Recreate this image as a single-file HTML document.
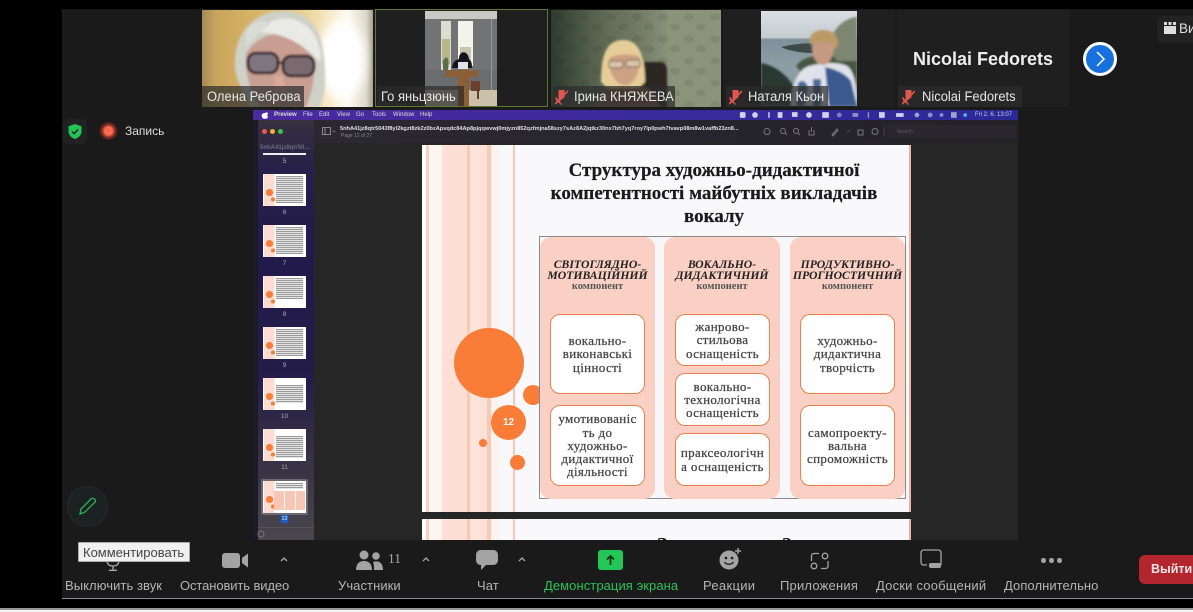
<!DOCTYPE html>
<html><head><meta charset="utf-8">
<style>
html,body{margin:0;padding:0;background:#000}
#p{position:relative;width:1193px;height:612px;overflow:hidden;background:#000;font-family:"Liberation Sans","Noto Sans CJK SC",sans-serif;filter:blur(.35px)}
#p div,#p span,#p svg{position:absolute}
.t{white-space:nowrap}
.tag{background:rgba(45,45,45,.72);height:21px;top:86px}
.nm{color:#e6e6e6;font-size:13.5px;top:89px;white-space:nowrap;transform:scaleX(.96);transform-origin:0 0}
.lb{top:578px;font-size:13px;color:#b4b4b4;white-space:nowrap;line-height:15px;letter-spacing:.07px}
.mb{top:112px;font-size:6px;color:#ddd;font-weight:bold;line-height:7px;white-space:nowrap}
.col{background:#fbd0c4;border-radius:11px;top:237px;height:262px}
.card{background:#fff;border:1.5px solid #e8834f;border-radius:10px;box-sizing:border-box;display:flex;align-items:center;justify-content:center;text-align:center;font-family:"Liberation Serif",serif;font-size:13px;line-height:13.3px;color:#444;letter-spacing:.35px;-webkit-text-stroke:.25px #444}
.h{font-family:"Liberation Serif",serif;font-style:italic;font-weight:bold;font-size:11.7px;line-height:11px;color:#222;text-align:center;white-space:nowrap;top:259px}
.k{font-family:"Liberation Serif",serif;font-weight:bold;font-size:10.5px;color:#555;text-align:center;top:281px;line-height:11px}
.c{border-radius:50%;background:#f97c37}
.th{left:263px;width:43px;height:32px;background:linear-gradient(90deg,#fff 0 1px,#fcdcd1 1px 11px,#fff 12px)}
.th i{position:absolute;display:block;left:3px;top:15px;width:6.5px;height:6.5px;border-radius:50%;background:#f97c37;box-shadow:3.5px 7px 0 -1.5px #f97c37}
.th b{position:absolute;display:block;left:13px;right:3px;top:2px;bottom:3px;background:repeating-linear-gradient(180deg,#9a9a9a 0 1px,#e4e4e4 1px 2px)}
.n{color:#aaa;font-size:6.5px;left:263px;width:43px;text-align:center;line-height:8px}
.sl{background:linear-gradient(90deg,#fff 0 4px,#fcd0c1 4px 7px,#fdf5f2 7px 20px,#fddfd5 20px 45px,#fcc8b6 45px 48px,#fde4db 48px 58px,#fde0d6 58px 65px,#fcc8b6 65px 69px,#fdf3ee 69px 77px,#f9f9fb 77px 91px,#fcc8b6 91px 93px,#f9f9fb 93px 100%);left:422px;width:489px}
</style></head><body>
<div id="p">
<div style="left:62px;top:9px;width:1131px;height:589px;background:#1a1a1a"></div>
<div style="left:62px;top:598px;width:1131px;height:1px;background:#7f8c96"></div>
<div style="left:0;top:608px;width:1193px;height:2px;background:#999"></div>
<div style="left:0;top:610px;width:1193px;height:2px;background:#f4f4f4"></div>

<!-- Thumb 1 -->
<svg style="left:202px;top:10px" width="171" height="97" viewBox="0 0 171 97">
<defs>
<linearGradient id="a" x1="0" x2="1"><stop offset="0" stop-color="#a68a55"/><stop offset=".08" stop-color="#c9a45c"/><stop offset=".5" stop-color="#e2c272"/><stop offset=".72" stop-color="#f5e6c0"/><stop offset=".85" stop-color="#fdfaf0"/><stop offset=".96" stop-color="#ddd8c8"/><stop offset="1" stop-color="#a59f92"/></linearGradient>
<filter id="b1"><feGaussianBlur stdDeviation="1.1"/></filter><filter id="b3"><feGaussianBlur stdDeviation="5"/></filter>
</defs>
<rect width="171" height="97" fill="url(#a)"/>
<ellipse cx="140" cy="50" rx="24" ry="40" fill="#fff" filter="url(#b3)"/>
<g filter="url(#b1)">
<path d="M33 58C31 25 50 1 82 1c26 0 38 20 40 46 2 20 2 36-4 50H48C44 84 34 72 33 58Z" fill="#cfd1c9"/>
<path d="M44 44c4-8 14-18 28-20 14 2 30 12 40 24 2 14-2 36-8 49H58C48 82 42 60 44 44Z" fill="#c99e92"/>
<path d="M58 22c12-20 44-18 56 6 4 10 6 18 4 24-16-18-34-28-60-30Z" fill="#e9eae5"/>
<path d="M44 22c6-10 16-14 24-8-6 6-16 12-24 24Z" fill="#dadbd4"/>
<rect x="46" y="43" width="30" height="20" rx="8" fill="#7f7480" stroke="#2a1b22" stroke-width="2.600"/>
<rect x="81" y="46" width="31" height="20" rx="8" fill="#7a6a70" stroke="#2a1b22" stroke-width="2.600"/>
<path d="M76 52l5 1.500" stroke="#2a1b22" stroke-width="2"/>
<path d="M72 66c1 8-2 13 2 17 4 3 11 2 13-2-4-5-6-9-6-15Z" fill="#dca898"/>
</g>
</svg>
<div class="tag" style="left:202px;width:102px"></div>
<div class="nm" style="left:207px">Олена Реброва</div>

<!-- Thumb 2 -->
<div style="left:375px;top:9px;width:173px;height:98px;box-sizing:border-box;border:1.5px solid #5d7a30;background:#1f1f1f;overflow:hidden"></div>
<svg style="left:425px;top:11px" width="72" height="95" viewBox="0 0 72 95">
<rect width="72" height="95" fill="#727374"/>
<rect width="72" height="8" fill="#c9c8c2"/>
<rect x="16" y="10" width="10" height="49" fill="#dcdcd0"/><rect x="33" y="10" width="15" height="45" fill="#f4f3ea"/>
<rect x="17" y="28" width="8" height="25" fill="#b9b68c"/>
<rect x="35" y="36" width="11" height="15" fill="#c7c4b0"/>
<rect x="0" y="79" width="72" height="16" fill="#cbc1aa"/><rect y="59" width="72" height="20" fill="#6b6c6d"/>
<rect x="66" y="8" width="1" height="71" fill="#999"/>
<path d="M18 50c3-6 7-5 5 9h-5Z" fill="#5a6e4c"/>
<path d="M27 57c1-7 4-8 7-9 0-9 9-9 10 0 2 2 3 3 3 9Z" fill="#15151f"/>
<rect x="33" y="51" width="10" height="7" fill="#dfe1e6"/>
<path d="M20 59h33v7H44v29H33V66H20Z" fill="#8a5f35"/>
<path d="M46 70h9v10h-1v8h-2v-8h-6Z" fill="#6d3f28"/>
</svg>
<div class="tag" style="left:377px;width:87px;top:86px;height:20px"></div>
<div class="nm" style="left:381px">Го яньцзюнь</div>

<!-- Thumb 3 -->
<svg style="left:551px;top:10px" width="170" height="97" viewBox="0 0 170 97">
<defs><pattern id="w" width="26" height="22" patternUnits="userSpaceOnUse"><rect width="26" height="22" fill="#8b947b"/><ellipse cx="8" cy="7" rx="5" ry="3.500" fill="#7f8a71"/><ellipse cx="20" cy="17" rx="5" ry="3.500" fill="#7f8a71"/></pattern>
<linearGradient id="sh" x1="0" x2="1"><stop offset="0" stop-color="#1d2b1f" stop-opacity=".85"/><stop offset=".35" stop-color="#2a3627" stop-opacity=".4"/><stop offset=".7" stop-color="#000" stop-opacity="0"/></linearGradient></defs>
<rect width="170" height="97" fill="url(#w)"/><rect width="170" height="97" fill="url(#sh)"/>
<g filter="url(#b1)">
<path d="M90 52h20c4 0 6 4 6 10v35H88Z" fill="#2c2523"/>
<path d="M46 97c0-10 10-22 26-22h10c16 0 26 10 26 22Z" fill="#825645"/>
<path d="M50 72c0-24 4-42 22-42 17 0 22 18 22 42l-6 6H56Z" fill="#e6cd98"/>
<path d="M58 50c0-7 30-7 31-2 0 15-6 27-15 27S58 64 58 50Z" fill="#cda184"/>
<rect x="58" y="51" width="14" height="7" rx="2" fill="#d8c5ad" stroke="#6b4c3e"/><rect x="75" y="50" width="14" height="7" rx="2" fill="#d8c5ad" stroke="#6b4c3e"/>
</g>
</svg>
<div class="tag" style="left:553px;width:122px"></div>
<svg style="left:555px;top:90px" width="13" height="15" viewBox="0 0 13 15"><path d="M4 0h5v7L4 11ZM1 7c0 4 2 6 5 6M6 13v2" fill="#e2564f" stroke="#e2564f"/><path d="M0 14L13 1" stroke="#e2564f" stroke-width="1.6"/></svg>
<div class="nm" style="left:574px">Ірина КНЯЖЕВА</div>

<!-- Thumb 4 -->
<div style="left:723px;top:10px;width:172px;height:97px;background:#1f1f1f"></div>
<svg style="left:761px;top:11px" width="96" height="95" viewBox="0 0 96 95">
<defs><linearGradient id="sky" x1="0" x2="0" y1="0" y2="1"><stop offset="0" stop-color="#dadfe2"/><stop offset=".28" stop-color="#c5ccd0"/><stop offset=".3" stop-color="#7f909b"/><stop offset=".55" stop-color="#8d9da5"/></linearGradient></defs>
<rect width="96" height="95" fill="url(#sky)"/>
<path d="M20 36c12-3 26-4 34-4l-2 10c-12 0-24-2-32-6Z" fill="#3e4b48"/>
<g filter="url(#b1)">
<path d="M0 52c12 2 24 10 32 22l10 21H0Z" fill="#2b3731"/>
<path d="M35 55c6-8 16-10 24-10h37v40H60Z" fill="#47563f"/>
<path d="M72 24c4-12 18-18 24-18v44H76c-6-8-8-16-4-26Z" fill="#7b8670"/>
<path d="M30 95c0-20 6-36 18-40 14-4 30-4 38 0 6 4 10 16 10 40Z" fill="#dfe2ea"/>
<path d="M64 56c10 2 20 6 26 14l6 25H68Z" fill="#3a5a90"/>
<path d="M37 72c4-4 8-2 10 4l-3 19h-9ZM52 68h8v27h-8Z" fill="#4e6a9a"/>
<path d="M49 34c-2-9 3-15 13-15s16 6 15 15c-1 2-2 4-3 4-6-5-16-8-25-4Z" fill="#bc9a68"/>
<path d="M51 34c4-4 18-4 22 0 0 12-5 20-11 20S50 46 51 34Z" fill="#c49a82"/>
</g>
</svg>
<div class="tag" style="left:726px;width:102px"></div>
<svg style="left:729px;top:90px" width="13" height="15" viewBox="0 0 13 15"><path d="M4 0h5v7L4 11ZM1 7c0 4 2 6 5 6M6 13v2" fill="#e2564f" stroke="#e2564f"/><path d="M0 14L13 1" stroke="#e2564f" stroke-width="1.6"/></svg>
<div class="nm" style="left:748px">Наталя Кьон</div>

<!-- Thumb 5 -->
<div style="left:897px;top:10px;width:172px;height:97px;background:#1f1f1f"></div>
<div class="t" style="left:913px;top:49px;font-size:18px;font-weight:bold;color:#eee;line-height:20px">Nicolai Fedorets</div>
<div class="tag" style="left:898px;width:124px"></div>
<svg style="left:902px;top:90px" width="13" height="15" viewBox="0 0 13 15"><path d="M4 0h5v7L4 11ZM1 7c0 4 2 6 5 6M6 13v2" fill="#e2564f" stroke="#e2564f"/><path d="M0 14L13 1" stroke="#e2564f" stroke-width="1.6"/></svg>
<div class="nm" style="left:922px">Nicolai Fedorets</div>

<!-- next -->
<svg style="left:1082px;top:41px" width="36" height="36" viewBox="0 0 36 36"><circle cx="18" cy="18" r="15.500" fill="#1770df" stroke="#fff" stroke-width="3"/><path d="M15 11l7 7-7 7" fill="none" stroke="#fff" stroke-width="1.500"/></svg>
<!-- view -->
<div style="left:1157px;top:16px;width:36px;height:27px;background:#222;border-radius:6px 0 0 6px"></div>
<svg style="left:1164px;top:22px" width="12" height="12" viewBox="0 0 12 12"><path d="M0 0h3v3H0ZM4.500 0h3v3h-3ZM9 0h3v3H9ZM0 4h12v8H0Z" fill="#ddd"/></svg>
<div class="t" style="left:1179px;top:21px;font-size:13.5px;color:#ddd;line-height:16px">Ви</div>

<!-- security + record -->
<div style="left:63px;top:119px;width:24px;height:25px;background:#222;border-radius:5px"></div>
<svg style="left:68px;top:124px" width="14" height="15" viewBox="0 0 14 15"><path d="M7 0l6.500 2.200v5c0 3.800-2.800 6.500-6.500 7.800C3.300 13.700.500 11 .500 7.200v-5Z" fill="#23c552"/><path d="M4 7.500l2.200 2.200L10 5.500" fill="none" stroke="#123" stroke-width="1.500"/></svg>
<div style="left:99px;top:122px;width:19px;height:18px;border-radius:50%;background:radial-gradient(circle,#ff6a50 0 30%,rgba(200,60,40,.55) 50%,rgba(60,25,20,.3) 75%,transparent 100%)"></div>
<div class="t" style="left:125px;top:124px;font-size:12px;color:#ddd;line-height:15px">Запись</div>

<!-- shared window -->
<div style="left:253px;top:110px;width:765px;height:430px;background:#262626"></div>
<div style="left:253px;top:110px;width:765px;height:10px;background:linear-gradient(90deg,#4a2b9e,#3b2a9e 50%,#2a2a96)"></div>
<svg style="left:261px;top:111px" width="8" height="8" viewBox="0 0 8 8"><path d="M4 2C5 1 7 1 7 3c-1 1-1 2 0 3-1 2-2 2-3 1.500C3 8 2 8 1 6 0 4 1 2 4 2Z" fill="#fff"/></svg>
<div class="mb" style="left:274px">Preview</div><div class="mb" style="left:303px;font-weight:normal">File</div><div class="mb" style="left:319px;font-weight:normal">Edit</div><div class="mb" style="left:337px;font-weight:normal">View</div><div class="mb" style="left:356px;font-weight:normal">Go</div><div class="mb" style="left:372px;font-weight:normal">Tools</div><div class="mb" style="left:393px;font-weight:normal">Window</div><div class="mb" style="left:420px;font-weight:normal">Help</div>
<svg style="left:737px;top:110px" width="232" height="10" viewBox="0 0 245 10" fill="#cfd3ea"><rect x="3" y="2" width="6" height="6" rx="1"/><circle cx="19" cy="5" r="3"/><rect x="33" y="2" width="1.500" height="6"/><rect x="43" y="2" width="5" height="6"/><rect x="58" y="2" width="6" height="5"/><circle cx="76" cy="5" r="3"/><rect x="90" y="2" width="7" height="6"/><circle cx="108" cy="5" r="2.500" opacity=".5"/><rect x="122" y="3" width="6" height="4" opacity=".6"/><rect x="138" y="2" width="1.500" height="6" opacity=".6"/><rect x="150" y="2" width="6" height="6"/><rect x="168" y="3" width="8" height="4"/><circle cx="190" cy="5" r="2.500" opacity=".7"/><circle cx="204" cy="5" r="2.500" opacity=".6"/><circle cx="216" cy="5" r="2" opacity=".6"/><rect x="226" y="2" width="6" height="6" opacity=".7"/><circle cx="241" cy="5" r="2" fill="#5fa8f0"/></svg>
<div class="mb" style="left:975px;font-weight:normal;color:#c9cdea">Fri 2. 6. 13:07</div>

<div style="left:314px;top:120px;width:704px;height:23px;background:linear-gradient(90deg,#2b2832,#232227)"></div>
<div style="left:253px;top:120px;width:61px;height:420px;background:linear-gradient(180deg,#35313f 0,#27204a 12%,#221a4a 35%,#241c48 60%,#3a3645 85%,#4a4750 100%)"></div>
<div style="left:253px;top:120px;width:5px;height:420px;background:#1c1a26"></div>
<div class="c" style="left:262px;top:129px;width:5px;height:5px;background:#f2564c"></div>
<div class="c" style="left:270px;top:129px;width:5px;height:5px;background:#f2b033"></div>
<div class="c" style="left:278px;top:129px;width:5px;height:5px;background:#3ec24d"></div>
<svg style="left:322px;top:126px" width="14" height="10" viewBox="0 0 14 10"><rect x=".5" y="1.500" width="8" height="7" fill="none" stroke="#888"/><path d="M3 1.500v7" stroke="#888"/><path d="M10.500 4.500l1.500 1.500 1.500-1.500" fill="none" stroke="#777" stroke-width=".7"/></svg>
<div class="t" style="left:340px;top:126px;width:410px;overflow:hidden;font-size:5.600px;font-weight:bold;color:#e0e0e4;line-height:7px">5nhA41jz8qtr5043f8yl2kgzt8zk2z0bzApsqdc84Ap8pjqqwvwj0mjyzn852qzfmjna58szy7sAz8A2jqtkz30nx7bh7yq7roy7lp0pwh7tvavp08m8w1vaffb23zn8...</div>
<div class="t" style="left:341px;top:133px;font-size:5px;color:#888;line-height:6px">Page 12 of 27</div>
<svg style="left:762px;top:126px" width="125" height="11" viewBox="0 0 125 11" fill="none" stroke="#77777c"><circle cx="5" cy="5.500" r="3"/><circle cx="21" cy="5" r="2.500"/><path d="M23 7l2 2"/><circle cx="34" cy="5" r="2.500"/><path d="M36 7l2 2"/><path d="M47 4v5h5V4M49.500 6V1"/><path d="M70 9l5-6 1 1-5 6Z"/><path d="M85 5h3" opacity=".6"/><rect x="96" y="4" width="5" height="5"/><circle cx="113" cy="5.500" r="3"/><path d="M122 1v9" opacity=".4"/></svg>
<div style="left:887px;top:125px;width:129px;height:13px;background:#2a282e;border-radius:2px"></div>
<div class="t" style="left:897px;top:129px;font-size:5px;color:#5c5c60;line-height:6px">Search</div>

<!-- sidebar -->
<div class="t" style="left:260px;top:144px;font-size:6px;color:#6f6c7c;line-height:8px;font-weight:bold">5nhA41jz8qtr50...</div>
<div style="left:263px;top:153px;width:43px;height:2px;background:#eee"></div>
<div class="n" style="top:158px">5</div>
<div class="th" style="top:174px"><i></i><b></b></div><div class="n" style="top:209px">6</div>
<div class="th" style="top:225px"><i></i><b></b></div><div class="n" style="top:260px">7</div>
<div class="th" style="top:276px"><i></i><b style="bottom:9px"></b></div><div class="n" style="top:311px">8</div>
<div class="th" style="top:327px"><i></i><b></b></div><div class="n" style="top:362px">9</div>
<div class="th" style="top:378px"><i></i><b style="top:7px;bottom:7px"></b></div><div class="n" style="top:413px">10</div>
<div class="th" style="top:429px"><i></i><b style="top:7px"></b></div><div class="n" style="top:464px">11</div>
<div style="left:261px;top:479px;width:47px;height:36px;background:#6c6870;border-radius:2px"></div>
<div class="th" style="top:481px"><i></i><b style="top:2px;bottom:24px"></b><b style="left:11px;right:22px;top:10px;bottom:3px;background:#f9c5b5"></b><b style="left:22px;right:11px;top:10px;bottom:3px;background:#f9c5b5"></b><b style="left:33px;right:1px;top:10px;bottom:3px;background:#f9c5b5"></b></div>
<div class="n" style="left:281px;width:7px;top:515px;background:#1a5fc8;color:#cfe;height:8px;font-size:5.500px">12</div>
<div style="left:258px;top:527px;width:56px;height:1px;background:#555"></div>
<svg style="left:257px;top:530px" width="8" height="8" viewBox="0 0 8 8"><circle cx="4" cy="4" r="3" fill="none" stroke="#777"/></svg>

<!-- slide -->
<div class="sl" style="top:145px;height:367px"></div>
<div style="left:909px;top:145px;width:2px;height:367px;background:#f7b19a"></div>
<div class="t" style="left:514px;top:159px;width:400px;text-align:center;font-family:'Liberation Serif',serif;font-weight:bold;font-size:19px;line-height:23.200px;color:#1a1a1a;-webkit-text-stroke:.2px #1a1a1a">Структура художньо-дидактичної<br>компетентності майбутніх викладачів<br>вокалу</div>
<div class="c" style="left:454px;top:328px;width:70px;height:70px"></div>
<div class="c" style="left:523px;top:385px;width:20px;height:20px"></div>
<div class="c" style="left:491px;top:405px;width:35px;height:35px;color:#fff;font-size:10px;font-weight:bold;text-align:center;line-height:35px">12</div>
<div class="c" style="left:479px;top:439px;width:8px;height:8px"></div>
<div class="c" style="left:510px;top:455px;width:15px;height:15px"></div>

<div style="left:539px;top:236px;width:367px;height:263px;box-sizing:border-box;background:#f7f7f9;border:1px solid #8a8a8a"></div>
<div class="col" style="left:540px;width:115px"></div>
<div class="col" style="left:664px;width:116px"></div>
<div class="col" style="left:790px;width:115px"></div>
<div class="h" style="left:540px;width:115px">СВІТОГЛЯДНО-<br>МОТИВАЦІЙНИЙ</div>
<div class="h" style="left:664px;width:116px">ВОКАЛЬНО-<br>ДИДАКТИЧНИЙ</div>
<div class="h" style="left:790px;width:115px">ПРОДУКТИВНО-<br>ПРОГНОСТИЧНИЙ</div>
<div class="k" style="left:540px;width:115px">компонент</div>
<div class="k" style="left:664px;width:116px">компонент</div>
<div class="k" style="left:790px;width:115px">компонент</div>
<div class="card" style="left:550px;top:314px;width:95px;height:80px">вокально-<br>виконавські<br>цінності</div>
<div class="card" style="left:550px;top:405px;width:95px;height:81px">умотивованіс<br>ть до<br>художньо-<br>дидактичної<br>діяльності</div>
<div class="card" style="left:675px;top:314px;width:95px;height:52px">жанрово-<br>стильова<br>оснащеність</div>
<div class="card" style="left:675px;top:373px;width:95px;height:53px">вокально-<br>технологічна<br>оснащеність</div>
<div class="card" style="left:675px;top:433px;width:95px;height:53px">праксеологічн<br>а оснащеність</div>
<div class="card" style="left:800px;top:314px;width:95px;height:80px">художньо-<br>дидактична<br>творчість</div>
<div class="card" style="left:800px;top:405px;width:95px;height:81px">самопроекту-<br>вальна<br>спроможність</div>

<div class="sl" style="top:519px;height:21px"></div>
<div style="left:909px;top:519px;width:2px;height:21px;background:#f7b19a"></div>
<div style="left:422px;top:536px;width:489px;height:4px;overflow:hidden"><span class="t" style="left:235px;top:-1px;font-family:'Liberation Serif',serif;font-weight:bold;font-size:20px;line-height:20px;color:#111">З</span><span class="t" style="left:360px;top:-1px;font-family:'Liberation Serif',serif;font-weight:bold;font-size:20px;line-height:20px;color:#111">?</span></div>

<!-- pencil -->
<div class="c" style="left:67px;top:486px;width:41px;height:41px;background:#1c2122;border:1px solid #252b2c;box-sizing:border-box"></div>
<svg style="left:79px;top:497px" width="18" height="18" viewBox="0 0 18 18"><path d="M1 17l1-5L12 2c1-1 2.500-1 3.500 0s1.200 2.300.3 3.300L6 15Z" fill="none" stroke="#22b455" stroke-width="1.300"/></svg>

<!-- toolbar -->
<svg style="left:104px;top:558px" width="18" height="13" viewBox="0 0 18 13" fill="none" stroke="#aaa" stroke-width="1.300"><path d="M3 2c0 4 2 6 6 6s6-2 6-6M9 8v4M5 12.300h8"/></svg>
<div style="left:78px;top:542px;width:112px;height:20px;background:#f0f0f0;border:1px solid #aaa;box-sizing:border-box;border-radius:1px"></div>
<div class="t" style="left:83px;top:545px;font-size:13px;color:#444;line-height:15px">Комментировать</div>

<svg style="left:222px;top:552px" width="26" height="17" viewBox="0 0 26 17" fill="#a3a3a3"><rect x="0" y="1" width="18" height="15" rx="3"/><path d="M20 6l6-4.500v14L20 11Z"/></svg>
<svg style="left:280px;top:557px" width="8" height="5" viewBox="0 0 8 5"><path d="M1 4l3-3 3 3" fill="none" stroke="#aaa" stroke-width="1.300"/></svg>
<svg style="left:356px;top:550px" width="27" height="20" viewBox="0 0 27 20" fill="#a3a3a3"><circle cx="8" cy="5" r="4.500"/><path d="M0 20c0-6 3-9 8-9s8 3 8 9Z"/><circle cx="20" cy="6" r="3.800"/><path d="M17 12c6-2 10 1 10 8h-9c0-3 0-6-1-8Z"/></svg>
<div class="t" style="left:388px;top:551px;font-size:13.500px;color:#aaa;line-height:16px;font-family:'Liberation Serif',serif">11</div>
<svg style="left:422px;top:557px" width="8" height="5" viewBox="0 0 8 5"><path d="M1 4l3-3 3 3" fill="none" stroke="#aaa" stroke-width="1.300"/></svg>
<svg style="left:476px;top:550px" width="22" height="20" viewBox="0 0 22 20"><path d="M5 0h12c3 0 5 2 5 5v5c0 3-2 5-5 5H10l-5 5 0-5C2 15 0 13 0 10V5c0-3 2-5 5-5Z" fill="#a3a3a3"/></svg>
<svg style="left:518px;top:557px" width="8" height="5" viewBox="0 0 8 5"><path d="M1 4l3-3 3 3" fill="none" stroke="#aaa" stroke-width="1.300"/></svg>
<svg style="left:598px;top:550px" width="25" height="20" viewBox="0 0 25 20"><rect width="25" height="20" rx="3" fill="#22c755"/><path d="M12.500 15V6M9 9.500l3.500-3.500 3.500 3.500" fill="none" stroke="#10311c" stroke-width="1.700"/></svg>
<svg style="left:719px;top:548px" width="24" height="22" viewBox="0 0 24 22"><circle cx="10" cy="12" r="9.500" fill="#a3a3a3"/><circle cx="7" cy="10" r="1.300" fill="#1a1a1a"/><circle cx="13" cy="10" r="1.300" fill="#1a1a1a"/><path d="M5.500 14c2 3 7 3 9 0" fill="none" stroke="#1a1a1a" stroke-width="1.300"/><path d="M19 0v6M16 3h6" stroke="#a3a3a3" stroke-width="1.500"/></svg>
<svg style="left:810px;top:552px" width="20" height="18" viewBox="0 0 20 18" fill="none" stroke="#a3a3a3" stroke-width="1.300"><circle cx="15" cy="4" r="2.800"/><circle cx="4" cy="14" r="2.800"/><path d="M9 1.500H4C2.500 1.500 1.500 2.500 1.500 4v5M18 9v5c0 1.500-1 2.500-2.500 2.500H11"/></svg>
<svg style="left:920px;top:549px" width="22" height="20" viewBox="0 0 22 20" fill="none"><path d="M7 16H4c-2 0-3-1-3-3V4c0-2 1-3 3-3h14c2 0 3 1 3 3v12" stroke="#a3a3a3" stroke-width="1.300"/><rect x="9" y="14" width="12" height="5" rx="2" fill="#a3a3a3"/></svg>
<div class="c" style="left:1041px;top:558px;width:4.500px;height:4.500px;background:#a3a3a3"></div>
<div class="c" style="left:1049px;top:558px;width:4.500px;height:4.500px;background:#a3a3a3"></div>
<div class="c" style="left:1057px;top:558px;width:4.500px;height:4.500px;background:#a3a3a3"></div>

<div class="lb" style="left:65px">Выключить звук</div>
<div class="lb" style="left:180px;letter-spacing:-.1px">Остановить видео</div>
<div class="lb" style="left:338px">Участники</div>
<div class="lb" style="left:477px">Чат</div>
<div class="lb" style="left:544px;color:#26c35a">Демонстрация экрана</div>
<div class="lb" style="left:703px;letter-spacing:.3px">Реакции</div>
<div class="lb" style="left:780px;letter-spacing:.2px">Приложения</div>
<div class="lb" style="left:876px;letter-spacing:.2px">Доски сообщений</div>
<div class="lb" style="left:1004px">Дополнительно</div>

<div style="left:1139px;top:555px;width:54px;height:29px;background:#b4262d;border-radius:6px 0 0 6px"></div>
<div class="t" style="left:1151px;top:562px;font-size:12.500px;font-weight:bold;color:#f3e6e6;line-height:15px">Выйти</div>
</div>
</body></html>
